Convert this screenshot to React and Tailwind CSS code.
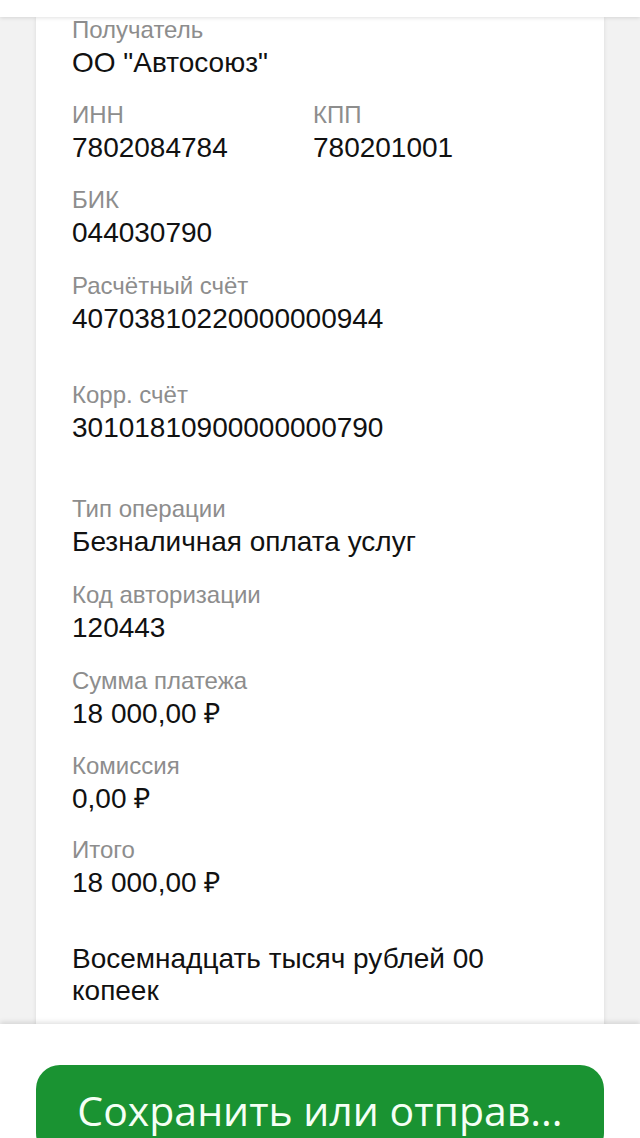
import React from "react";

const font = { fontFamily: '"Liberation Sans", Arial, sans-serif' };

function Item({ label, value, className = "", labelClass = "leading-[32px]" }) {
  return (
    <div className={className}>
      <div className={"text-[24px] text-[#8d8d8d] " + labelClass}>{label}</div>
      <div className="text-[28px] leading-[34px] text-[#111111]">{value}</div>
    </div>
  );
}

export default function App() {
  return (
    <div
      className="h-[1138px] w-[640px] flex flex-col bg-[#f2f2f2] overflow-hidden"
      style={font}
    >
      <div className="h-[17px] shrink-0 bg-white relative z-10 shadow-[0_1px_4px_rgba(0,0,0,0.12)]" />
      <div className="flex-1 overflow-hidden px-[36px]">
        <div className="bg-white px-[36px] pt-[1px] pb-[40px] shadow-[0_0_4px_rgba(0,0,0,0.1)] flex flex-col">
          <Item label="Получатель" value={'ОО "Автосоюз"'} labelClass="leading-[24px] mb-[4px]" />
          <div className="mt-[19px] grid grid-cols-[241px_1fr]">
            <Item label="ИНН" value="7802084784" />
            <Item label="КПП" value="780201001" />
          </div>
          <Item className="mt-[19px]" label="БИК" value="044030790" />
          <Item className="mt-[20px]" label="Расчётный счёт" value="40703810220000000944" />
          <Item className="mt-[43px]" label="Корр. счёт" value="30101810900000000790" />
          <Item className="mt-[48px]" label="Тип операции" value="Безналичная оплата услуг" />
          <Item className="mt-[20px]" label="Код авторизации" value="120443" />
          <Item className="mt-[20px]" label="Сумма платежа" value="18 000,00 ₽" />
          <Item className="mt-[19px]" label="Комиссия" value="0,00 ₽" />
          <Item className="mt-[18px]" label="Итого" value="18 000,00 ₽" />
          <div className="mt-[43px] text-[28px] leading-[32px] text-[#111111]">
            Восемнадцать тысяч рублей 00 копеек
          </div>
        </div>
      </div>
      <div className="h-[114px] shrink-0 bg-white relative z-10 px-[36px] pt-[41px] shadow-[0_-2px_5px_rgba(0,0,0,0.12)]">
        <div
          className="h-[92px] rounded-[24px] bg-[#1a9332] flex items-center justify-center text-[41px] text-[#f5fff5]"
          style={{ fontFamily: '"Open Sans", "Noto Sans", sans-serif' }}
        >
          Сохранить или отправ...
        </div>
      </div>
    </div>
  );
}
